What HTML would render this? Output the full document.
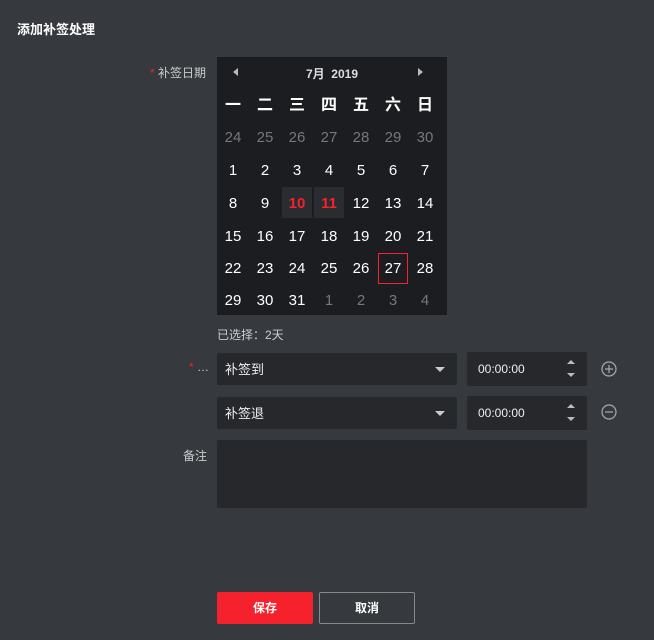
<!DOCTYPE html>
<html><head><meta charset="utf-8"><style>
*{margin:0;padding:0;box-sizing:border-box}
body{width:654px;height:640px;background:#36393e;font-family:"Liberation Sans","Noto Sans CJK SC",sans-serif;color:#ddd;position:relative;overflow:hidden;font-size:12px}
.a{position:absolute}
.cal{left:217px;top:57px;width:230px;height:258px;background:#1b1d20}
.c{position:absolute;width:32px;height:32px;line-height:32px;text-align:center;font-size:15px;color:#fff}
.g{color:#777}
.r{color:#f2222e;font-weight:bold;background:#2a2c30}
.box{background:#26282c;border-radius:2px}
.lbl{font-size:12px;color:#ccc}
</style></head><body>
<div class="a" style="left:17px;top:19px;font-size:13px;font-weight:bold;color:#fff">添加补签处理</div>
<div class="a lbl" style="left:150px;top:64px"><span style="color:#f2222e">*</span> 补签日期</div>
<div class="a cal">
<div class="a" style="left:16px;top:11px;width:0;height:0;border-top:4px solid transparent;border-bottom:4px solid transparent;border-right:5px solid #bbb"></div>
<div class="a" style="left:201px;top:11px;width:0;height:0;border-top:4px solid transparent;border-bottom:4px solid transparent;border-left:5px solid #bbb"></div>
<div class="a" style="left:0;width:230px;top:8px;text-align:center;font-weight:bold;font-size:12px;color:#ddd">7月&nbsp; 2019</div>
<div id="g"></div>
</div>
<div class="a" style="left:217px;top:326px;font-size:12px;color:#ccc">已选择：2天</div>
<div class="a lbl" style="left:189px;top:360px"><span style="color:#f2222e">*</span> …</div>
<div class="a box" style="left:217px;top:353px;width:240px;height:32px"><span class="a" style="left:8px;top:6px;font-size:13px;color:#eee">补签到</span><span class="a" style="left:218px;top:14px;border-left:5px solid transparent;border-right:5px solid transparent;border-top:5px solid #ccc"></span></div>
<div class="a box" style="left:467px;top:352px;width:120px;height:34px"><span class="a" style="left:11px;top:10px;font-size:12px;color:#eee">00:00:00</span><span class="a" style="left:100px;top:8px;border-left:4px solid transparent;border-right:4px solid transparent;border-bottom:4px solid #bbb"></span><span class="a" style="left:100px;top:21px;border-left:4px solid transparent;border-right:4px solid transparent;border-top:4px solid #bbb"></span></div>
<svg class="a" style="left:601px;top:361px" width="16" height="16"><circle cx="8" cy="8" r="7" fill="none" stroke="#aaa" stroke-width="1.2"/><path d="M4 8h8M8 4v8" stroke="#aaa" stroke-width="1.2"/></svg>
<div class="a box" style="left:217px;top:397px;width:240px;height:32px"><span class="a" style="left:8px;top:6px;font-size:13px;color:#eee">补签退</span><span class="a" style="left:218px;top:14px;border-left:5px solid transparent;border-right:5px solid transparent;border-top:5px solid #ccc"></span></div>
<div class="a box" style="left:467px;top:396px;width:120px;height:34px"><span class="a" style="left:11px;top:10px;font-size:12px;color:#eee">00:00:00</span><span class="a" style="left:100px;top:8px;border-left:4px solid transparent;border-right:4px solid transparent;border-bottom:4px solid #bbb"></span><span class="a" style="left:100px;top:21px;border-left:4px solid transparent;border-right:4px solid transparent;border-top:4px solid #bbb"></span></div>
<svg class="a" style="left:601px;top:404px" width="16" height="16"><circle cx="8" cy="8" r="7" fill="none" stroke="#aaa" stroke-width="1.2"/><path d="M4 8h8" stroke="#aaa" stroke-width="1.2"/></svg>
<div class="a lbl" style="left:183px;top:447px">备注</div>
<div class="a box" style="left:217px;top:440px;width:370px;height:68px"></div>
<div class="a" style="left:217px;top:592px;width:96px;height:32px;background:#f5222d;border-radius:2px;color:#fff;font-weight:bold;text-align:center;line-height:32px;font-size:12px">保存</div>
<div class="a" style="left:319px;top:592px;width:96px;height:32px;border:1px solid #888;border-radius:2px;color:#fff;font-weight:bold;text-align:center;line-height:30px;font-size:12px">取消</div>
<script>
var g=document.getElementById('g'),h='';
var wd=['一','二','三','四','五','六','日'];
for(var i=0;i<7;i++)h+='<div class="c" style="left:'+i*32+'px;top:33px;font-weight:bold;font-size:16px">'+wd[i]+'</div>';
var days=[24,25,26,27,28,29,30];for(var d=1;d<=31;d++)days.push(d);days.push(1,2,3,4);
var tops=[65,98,131,164,196,228];
for(var k=0;k<days.length;k++){var row=Math.floor(k/7),col=k%7,cls='c';
if(row==0||(row==5&&col>2))cls+=' g';
if(row==2&&(col==2||col==3))cls+=' r';
var st='left:'+(col*32+1)+'px;top:'+tops[row]+'px;width:30px;height:31px;line-height:31px';
if(row==2&&(col==2||col==3))st='left:'+(col*32+1)+'px;top:'+(tops[row]-1)+'px;width:30px;height:31px;line-height:33px';
if(row==4&&col==5)st+=';border:1px solid #f2222e;line-height:29px';
h+='<div class="'+cls+'" style="'+st+'">'+days[k]+'</div>';}
g.innerHTML=h;
</script>
</body></html>
